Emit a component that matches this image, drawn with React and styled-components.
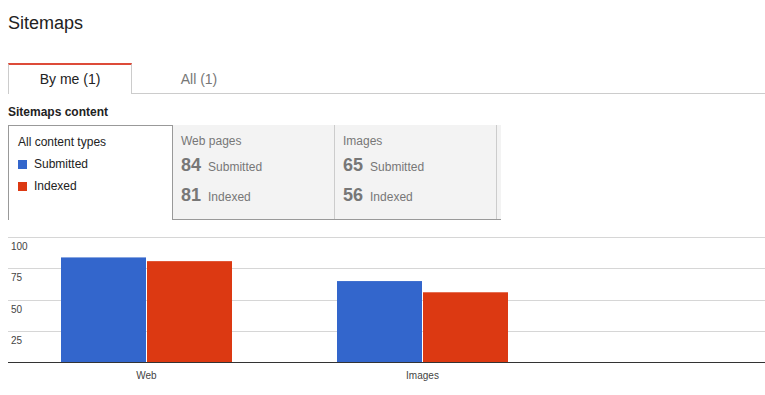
import React from "react";
import styled, { createGlobalStyle } from "styled-components";

const GlobalStyle = createGlobalStyle`
    html, body {
        margin: 0;
        padding: 0;
        background: #fff;
    }
    body {
        font-family: "Liberation Sans", Arial, sans-serif;
        color: #222;
    }
`;

const Page = styled.div`
    width: 765px;
    padding-left: 8px;
    box-sizing: border-box;
    overflow: hidden;
`;

const Title = styled.h1`
    margin: 12px 0 0;
    font-size: 18px;
    font-weight: normal;
    line-height: 22px;
    color: #222;
`;

const TabRow = styled.div`
    display: flex;
    margin-top: 29px;
    height: 30px;
    border-bottom: 1px solid #ccc;
`;

const Tab = styled.div`
    box-sizing: border-box;
    width: ${(p) => p.$width}px;
    height: ${(p) => (p.$active ? 31 : 30)}px;
    margin-bottom: ${(p) => (p.$active ? -1 : 0)}px;
    text-align: center;
    font-size: 14px;
    line-height: 29px;
    color: ${(p) => (p.$active ? "#222" : "#777")};
    background: ${(p) => (p.$active ? "#fff" : "transparent")};
    border-top: 2px solid ${(p) => (p.$active ? "#dd4b39" : "transparent")};
    border-left: 1px solid ${(p) => (p.$active ? "#ccc" : "transparent")};
    border-right: 1px solid ${(p) => (p.$active ? "#ccc" : "transparent")};
`;

const Heading = styled.h2`
    margin: 10px 0 0;
    font-size: 12px;
    font-weight: bold;
    line-height: 16px;
    color: #222;
`;

const Cards = styled.div`
    display: flex;
    margin-top: 5px;
    height: 95px;
`;

const LegendCard = styled.div`
    box-sizing: border-box;
    width: 165px;
    padding: 8px 0 0 9px;
    border: 1px solid #999;
    border-bottom: none;
    background: #fff;
`;

const LegendTitle = styled.div`
    font-size: 12px;
    line-height: 16px;
    color: #222;
`;

const LegendItem = styled.div`
    display: flex;
    align-items: center;
    gap: 7px;
    margin-top: ${(p) => p.$top}px;
    font-size: 12px;
    line-height: 16px;
    color: #222;
`;

const Swatch = styled.span`
    width: 9px;
    height: 9px;
    background: ${(p) => p.$color};
`;

const StatGroup = styled.div`
    display: flex;
    padding-right: 4px;
    background: #f3f3f3;
    border-bottom: 1px solid #999;
`;

const StatCard = styled.div`
    box-sizing: border-box;
    width: 162px;
    padding: 8px 0 0 8px;
    border-right: 1px solid #ccc;
    color: #777;
`;

const StatLabel = styled.div`
    font-size: 12px;
    line-height: 16px;
`;

const StatRow = styled.div`
    display: flex;
    align-items: baseline;
    gap: 7px;
    margin-top: ${(p) => p.$top}px;
    height: 22px;
`;

const StatNumber = styled.span`
    font-size: 18px;
    font-weight: bold;
    line-height: 22px;
`;

const StatText = styled.span`
    font-size: 12px;
`;

const Chart = styled.svg`
    display: block;
    font-family: "Liberation Sans", Arial, sans-serif;
`;

const BLUE = "#3366cc";
const RED = "#dc3912";

const stats = [
    { label: "Web pages", submitted: 84, indexed: 81 },
    { label: "Images", submitted: 65, indexed: 56 },
];

const BASE = 142;
const SCALE = 1.245;
const ticks = [100, 75, 50, 25];

const groups = [
    { name: "Web", x: 53, submitted: 84, indexed: 81 },
    { name: "Images", x: 329, submitted: 65, indexed: 56 },
];

const App = () => {
    return (
        <Page>
            <GlobalStyle />
            <Title>Sitemaps</Title>
            <TabRow>
                <Tab $active $width={124}>By me (1)</Tab>
                <Tab $width={134}>All (1)</Tab>
            </TabRow>
            <Heading>Sitemaps content</Heading>
            <Cards>
                <LegendCard>
                    <LegendTitle>All content types</LegendTitle>
                    <LegendItem $top={6}>
                        <Swatch $color={BLUE} />
                        Submitted
                    </LegendItem>
                    <LegendItem $top={6}>
                        <Swatch $color={RED} />
                        Indexed
                    </LegendItem>
                </LegendCard>
                <StatGroup>
                    {stats.map((s) => (
                        <StatCard key={s.label}>
                            <StatLabel>{s.label}</StatLabel>
                            <StatRow $top={5}>
                                <StatNumber>{s.submitted}</StatNumber>
                                <StatText>Submitted</StatText>
                            </StatRow>
                            <StatRow $top={8}>
                                <StatNumber>{s.indexed}</StatNumber>
                                <StatText>Indexed</StatText>
                            </StatRow>
                        </StatCard>
                    ))}
                </StatGroup>
            </Cards>
            <Chart width="757" height="175" viewBox="0 0 757 175">
                {ticks.map((t) => {
                    const y = Math.round(BASE - t * 1.25) + 0.5;
                    return (
                        <g key={t}>
                            <line x1="0" x2="757" y1={y} y2={y} stroke="#d6d6d6" strokeWidth="1" />
                            <text x="3" y={y + 12} fontSize="10" fill="#444">
                                {t}
                            </text>
                        </g>
                    );
                })}
                {groups.map((g) => (
                    <g key={g.name}>
                        <rect
                            x={g.x}
                            y={BASE - g.submitted * SCALE}
                            width="85"
                            height={g.submitted * SCALE}
                            fill={BLUE}
                        />
                        <rect
                            x={g.x + 86}
                            y={BASE - g.indexed * SCALE}
                            width="85"
                            height={g.indexed * SCALE}
                            fill={RED}
                        />
                        <text x={g.x + 85.5} y="159" fontSize="10" fill="#444" textAnchor="middle">
                            {g.name}
                        </text>
                    </g>
                ))}
                <line x1="0" x2="757" y1={BASE + 0.5} y2={BASE + 0.5} stroke="#333" strokeWidth="1" />
            </Chart>
        </Page>
    );
};

export default App;
